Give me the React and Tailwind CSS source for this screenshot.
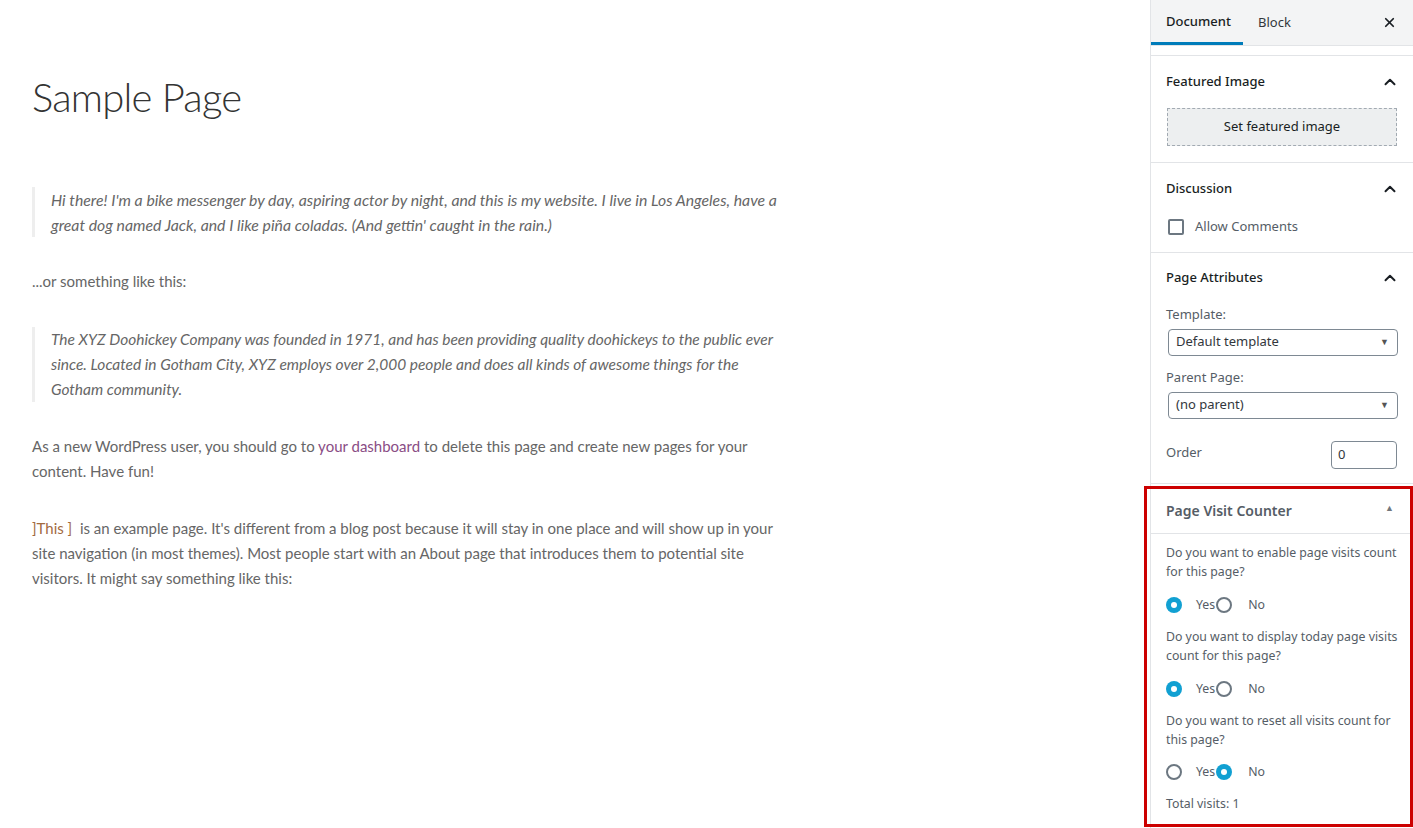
import { ChevronUp, X } from 'lucide-react';

const content = { fontFamily: 'Lato, "Liberation Sans", sans-serif' };
const side = { fontFamily: '"Noto Sans", "Open Sans", sans-serif' };

function Radio({ checked }) {
	return checked ? (
		<span className="flex h-4 w-4 items-center justify-center rounded-full bg-[#11a0d2]">
			<span className="h-[6px] w-[6px] rounded-full bg-white" />
		</span>
	) : (
		<span className="h-4 w-4 rounded-full border-2 border-[#6c7781] bg-white" />
	);
}

function RadioRow({ yes }) {
	return (
		<div className="flex h-[20px] items-center text-[#555d66]">
			<Radio checked={yes} />
			<span className="ml-[14px] mr-[1px]">Yes</span>
			<Radio checked={!yes} />
			<span className="ml-4">No</span>
		</div>
	);
}

function Panel({ title, children, last }) {
	return (
		<div className={last ? '' : 'border-b border-[#e2e4e7]'}>
			<div className="flex h-[50px] items-center justify-between pl-[15px] pr-[14px] pt-[1px] text-[13px] font-medium text-[#191e23]">
				<span>{title}</span>
				<ChevronUp size={18} strokeWidth={2.6} />
			</div>
			{children}
		</div>
	);
}

function Select({ value }) {
	return (
		<div className="ml-[2px] flex h-[27px] w-[230px] items-center justify-between rounded-[4px] border border-[#7e8993] pl-[7px] pr-[8px] text-[13px] text-[#32373c]">
			<span>{value}</span>
			<span className="text-[9px] text-[#555]">▼</span>
		</div>
	);
}

export default function App() {
	return (
		<div className="relative flex h-[828px] overflow-hidden bg-white">
			{/* content */}
			<main className="flex-1 pl-[32px] pt-[72px] text-[15px] leading-[25px] text-[#666]" style={content}>
				<h1 className="text-[40px] font-light leading-[50px] tracking-[-0.8px] text-[#333]">Sample Page</h1>

				<blockquote className="mt-[65px] border-l-[3px] border-[#eee] pl-4 text-[15.8px] italic whitespace-nowrap">
					Hi there! I'm a bike messenger by day, aspiring actor by night, and this is my website. I live in Los Angeles, have a
					<br />
					great dog named Jack, and I like piña coladas. (And gettin' caught in the rain.)
				</blockquote>

				<p className="mt-[32px]">...or something like this:</p>

				<blockquote className="mt-[33px] border-l-[3px] border-[#eee] pl-4 text-[15.5px] italic whitespace-nowrap">
					The XYZ Doohickey Company was founded in 1971, and has been providing quality doohickeys to the public ever
					<br />
					since. Located in Gotham City, XYZ employs over 2,000 people and does all kinds of awesome things for the
					<br />
					Gotham community.
				</blockquote>

				<p className="mt-[32px] whitespace-nowrap">
					As a new WordPress user, you should go to <span className="text-[#8a4d85]">your dashboard</span> to delete this page and create new pages for your
					<br />
					content. Have fun!
				</p>

				<p className="mt-[32px] whitespace-nowrap">
					<span className="text-[#a26a3f]">]This ]</span>&nbsp; is an example page. It's different from a blog post because it will stay in one place and will show up in your
					<br />
					site navigation (in most themes). Most people start with an About page that introduces them to potential site
					<br />
					visitors. It might say something like this:
				</p>
			</main>

			{/* sidebar */}
			<aside className="flex w-[263px] flex-col border-l border-[#e2e4e7] bg-white" style={side}>
				<div className="flex h-[46px] items-stretch justify-between border-b border-[#e2e4e7] bg-[#f3f4f5] text-[13px] text-[#191e23]">
					<div className="flex">
						<div className="flex w-[92px] items-center border-b-[3px] border-[#007cba] pl-[15px] pt-[1px] font-medium">Document</div>
						<div className="flex items-center pl-[15px] pt-[1px] text-[#32373c]">Block</div>
					</div>
					<div className="flex items-center pr-[16px]">
						<X size={15} strokeWidth={2.8} />
					</div>
				</div>

				<div className="h-[10px] border-b border-[#e2e4e7]" />

				<Panel title="Featured Image">
					<div className="px-4 pb-[16px] pt-[2px]">
						<div className="flex h-[38px] items-center justify-center border border-dashed border-[#a2aab2] bg-[#edeff0] text-[13px] text-[#191e23]">
							Set featured image
						</div>
					</div>
				</Panel>

				<Panel title="Discussion">
					<div className="flex items-center px-4 pb-[15px] pt-[4px] text-[13px] text-[#555d66]">
						<span className="ml-[1px] h-4 w-4 rounded-[2px] border-2 border-[#6c7781]" />
						<span className="ml-[11px]">Allow Comments</span>
					</div>
				</Panel>

				<Panel title="Page Attributes">
					<div className="px-[15px] pb-[14px] text-[13px] text-[#555d66]">
						<div className="pt-[1px] leading-[20px]">Template:</div>
						<div className="mt-[5px]">
							<Select value="Default template" />
						</div>
						<div className="mt-[11px] leading-[20px]">Parent Page:</div>
						<div className="mt-[5px]">
							<Select value="(no parent)" />
						</div>
						<div className="mt-[22px] flex items-center justify-between">
							<span className="-mt-[4px]">Order</span>
							<div className="mr-[1px] flex h-[28px] w-[66px] items-center rounded-[4px] border border-[#7e8993] pl-[6px] text-[#32373c]">0</div>
						</div>
					</div>
				</Panel>

				<div className="mt-[2px] border-t border-[#e2e4e7]">
					<div className="flex h-[47px] items-center justify-between border-b border-[#e2e4e7] pl-[15px] pr-[19px] pt-[1px]">
						<span className="text-[14px] font-semibold text-[#555d66]">Page Visit Counter</span>
						<span className="-mt-[4px] text-[9px] text-[#72777c]">▲</span>
					</div>
					<div className="px-[15px] pt-[9px] text-[12.3px] leading-[19.5px] text-[#555d66]">
						<p className="whitespace-nowrap">
							Do you want to enable page visits count
							<br />
							for this page?
						</p>
						<div className="mt-[13px]">
							<RadioRow yes />
						</div>
						<p className="mt-[12px] whitespace-nowrap">
							Do you want to display today page visits
							<br />
							count for this page?
						</p>
						<div className="mt-[13px]">
							<RadioRow yes />
						</div>
						<p className="mt-[12px] whitespace-nowrap">
							Do you want to reset all visits count for
							<br />
							this page?
						</p>
						<div className="mt-[12px]">
							<RadioRow yes={false} />
						</div>
						<p className="mt-[12px]">Total visits: 1</p>
					</div>
				</div>
			</aside>

			{/* annotation */}
			<div className="pointer-events-none absolute left-[1144px] top-[486px] h-[341px] w-[269px] border-[3px] border-[#cc0000]" />
		</div>
	);
}
